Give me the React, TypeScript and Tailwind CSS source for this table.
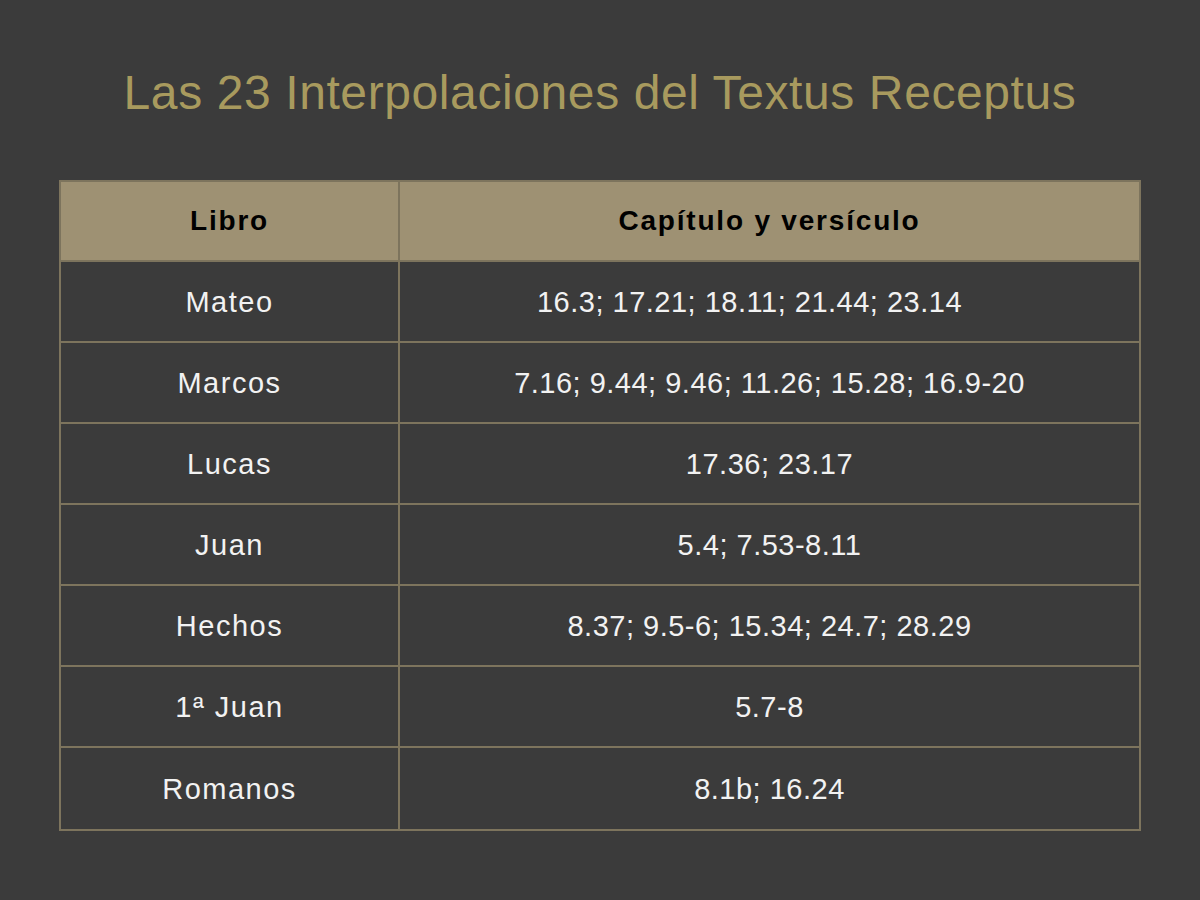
import React from "react";

const rows: [string, string, string][] = [
  ["Mateo", "16.3; 17.21; 18.11; 21.44; 23.14", "pr-[40px]"],
  ["Marcos", "7.16; 9.44; 9.46; 11.26; 15.28; 16.9-20", ""],
  ["Lucas", "17.36; 23.17", ""],
  ["Juan", "5.4; 7.53-8.11", ""],
  ["Hechos", "8.37; 9.5-6; 15.34; 24.7; 28.29", ""],
  ["1ª Juan", "5.7-8", ""],
  ["Romanos", "8.1b; 16.24", ""],
];

export default function App() {
  return (
    <div
      className="w-[1200px] h-[900px] bg-[#3b3b3b] flex flex-col items-center"
      style={{ fontFamily: '"Liberation Sans", Arial, sans-serif' }}
    >
      <h1 className="mt-[62px] h-[62px] leading-[62px] text-[48px] text-[#a89a5e] tracking-[0.6px] font-normal">
        Las 23 Interpolaciones del Textus Receptus
      </h1>
      <div className="mt-[56px] w-[1082px] border-2 border-[#7d745d]">
        <div className="flex h-[80px] bg-[#9e9173] border-b-2 border-[#7d745d]">
          <div className="w-[339px] border-r-2 border-[#7d745d] flex items-center justify-center text-[28px] tracking-[1.8px] font-bold text-black">
            Libro
          </div>
          <div className="flex-1 flex items-center justify-center text-[28px] tracking-[1.8px] font-bold text-black">
            Capítulo y versículo
          </div>
        </div>
        {rows.map(([a, b, extra], i) => (
          <div
            key={a}
            className={
              "flex h-[81px] " + (i < rows.length - 1 ? "border-b-2 border-[#7d745d]" : "")
            }
          >
            <div className="w-[339px] pt-[3px] border-r-2 border-[#7d745d] flex items-center justify-center text-[29px] tracking-[1.5px] text-[#f2f2f2]">
              {a}
            </div>
            <div className={"flex-1 pt-[3px] flex items-center justify-center text-[29px] tracking-[0.5px] text-[#f2f2f2] " + extra}>
              {b}
            </div>
          </div>
        ))}
      </div>
    </div>
  );
}
